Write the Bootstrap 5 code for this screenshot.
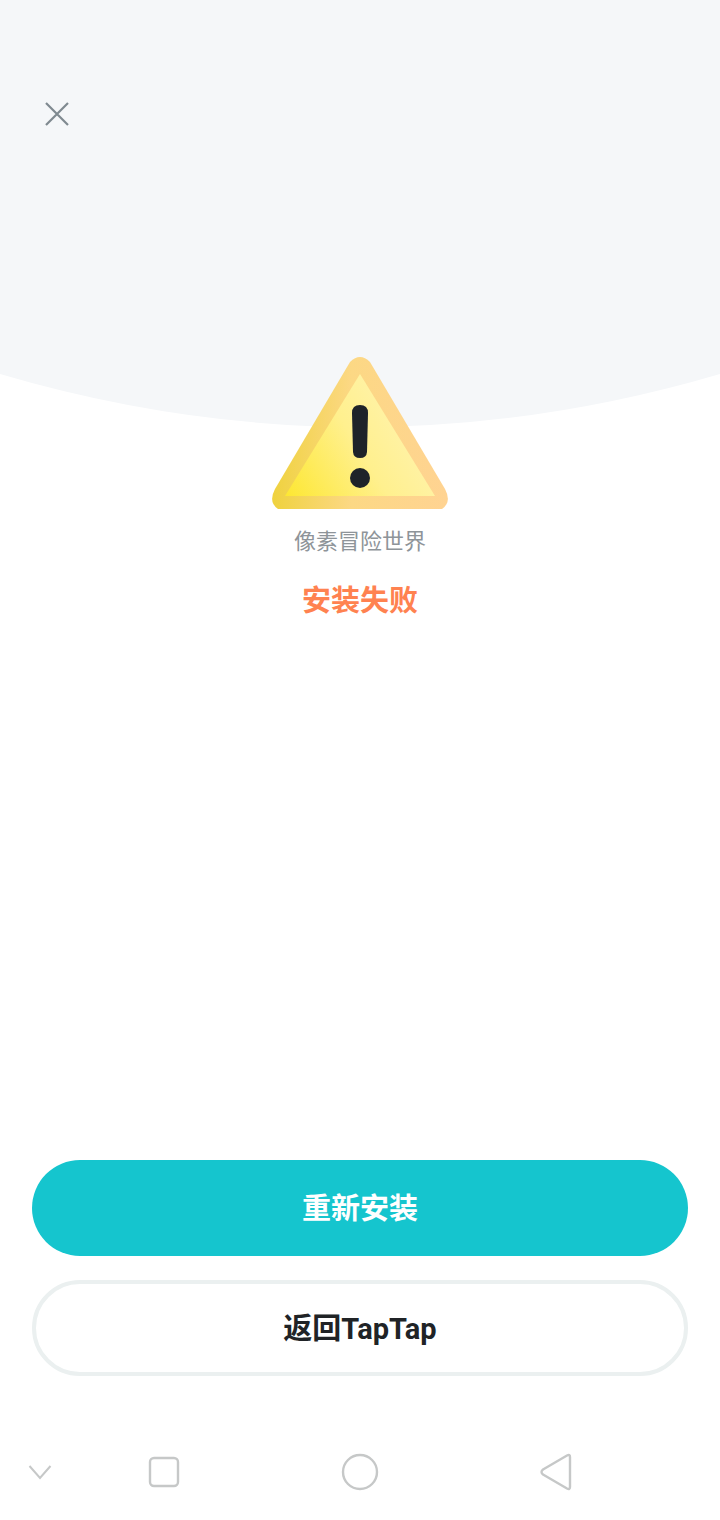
<!DOCTYPE html>
<html lang="zh">
<head>
<meta charset="utf-8">
<title>安装失败</title>
<link href="https://cdn.jsdelivr.net/npm/bootstrap@5.3.0/dist/css/bootstrap.min.css" rel="stylesheet">
<style>
html,body{margin:0;height:1520px;background:#fff;overflow:hidden}
body{font-family:Roboto,"Noto Sans CJK SC",sans-serif}
.screen{position:relative;width:720px;height:1520px}
.dome{position:absolute;left:0;top:0;width:720px;height:430px;z-index:0}
.layer{position:relative;z-index:1;height:1520px}
.close-row{height:356px;padding:100px 0 0 43px}
.close-icon{display:block;width:28px;height:28px}
.warn-icon{display:block;width:176px;height:153px}
.app-name{font-size:22px;line-height:32px;color:#8e9499;margin-top:17px}
.fail-text{font-size:29px;line-height:42px;font-weight:700;color:#ff8250;margin-top:22px}
.actions{padding:0 32px;margin-top:538px;gap:24px}
.btn-pill{height:96px;border-radius:48px;font-size:29px;line-height:1;font-weight:700;width:656px;display:flex;align-items:center;justify-content:center;padding:3px 0 0}
.btn-pill.btn-main{background:#15c5ce;border:0;color:#fff}
.btn-pill.btn-alt{background:#fff;border:4px solid #ebf0f0;color:#202326}
.sysbar{height:144px;position:relative}
.sys-icon{position:absolute;display:block}
</style>
</head>
<body>
<div class="screen">
<svg class="dome" viewBox="0 0 720 430" aria-hidden="true"><path d="M0 0H720V374Q360 480 0 374Z" fill="#f5f7f9"/></svg>
<div class="layer d-flex flex-column">
  <div class="close-row">
    <svg class="close-icon" viewBox="0 0 28 28" aria-hidden="true"><path d="M3 3L25 25M25 3L3 25" stroke="#7f8a90" stroke-width="2.2" fill="none"/></svg>
  </div>
  <div class="d-flex flex-column align-items-center text-center">
    <svg class="warn-icon" viewBox="0 0 176 153" aria-hidden="true">
      <defs>
        <linearGradient id="ring" x1="0" y1="0" x2="1" y2="0"><stop offset="0" stop-color="#efd23e"/><stop offset=".45" stop-color="#fcd884"/><stop offset="1" stop-color="#ffd392"/></linearGradient>
        <linearGradient id="fillg" x1="0" y1="1" x2="1" y2=".5"><stop offset="0" stop-color="#fde732"/><stop offset=".55" stop-color="#fff08e"/><stop offset="1" stop-color="#fff3b0"/></linearGradient>
      </defs>
      <path d="M78 6Q88 -4 98 6L173 133Q180 146 170 153H6Q-4 146 3 133Z" fill="url(#ring)"/>
      <path d="M88 18L163 140H13Z" fill="url(#fillg)"/>
      <path d="M80 57Q80 49 88 49Q96 49 96 57L95 96Q94.500 102 88 102Q81.500 102 81 96Z" fill="#1e2329"/>
      <circle cx="88" cy="122" r="10" fill="#1e2329"/>
    </svg>
    <div class="app-name">像素冒险世界</div>
    <div class="fail-text">安装失败</div>
  </div>
  <div class="actions d-flex flex-column">
    <button type="button" class="btn btn-pill btn-main">重新安装</button>
    <button type="button" class="btn btn-pill btn-alt">返回TapTap</button>
  </div>
  <div class="sysbar">
    <svg class="sys-icon" style="left:28px;top:88px" width="24" height="16" viewBox="0 0 24 16" aria-hidden="true"><path d="M1.500 2L12 14L22.500 2" stroke="#c6c8c8" stroke-width="2" fill="none"/></svg>
    <svg class="sys-icon" style="left:148px;top:80px" width="32" height="32" viewBox="0 0 32 32" aria-hidden="true"><rect x="2" y="2" width="28" height="28" rx="4" stroke="#c6c8c8" stroke-width="2.400" fill="none"/></svg>
    <svg class="sys-icon" style="left:341px;top:77px" width="38" height="38" viewBox="0 0 38 38" aria-hidden="true"><circle cx="19" cy="19" r="17" stroke="#c6c8c8" stroke-width="2.400" fill="none"/></svg>
    <svg class="sys-icon" style="left:540px;top:77px" width="32" height="38" viewBox="0 0 32 38" aria-hidden="true"><path d="M27 2.500Q30 1 30 4V34Q30 37 27 35.500L3 21.500Q0 19 3 16.500Z" stroke="#c6c8c8" stroke-width="2.400" fill="none" stroke-linejoin="round"/></svg>
  </div>
</div>
</div>
<script src="https://cdn.jsdelivr.net/npm/bootstrap@5.3.0/dist/js/bootstrap.bundle.min.js"></script>
</body>
</html>
